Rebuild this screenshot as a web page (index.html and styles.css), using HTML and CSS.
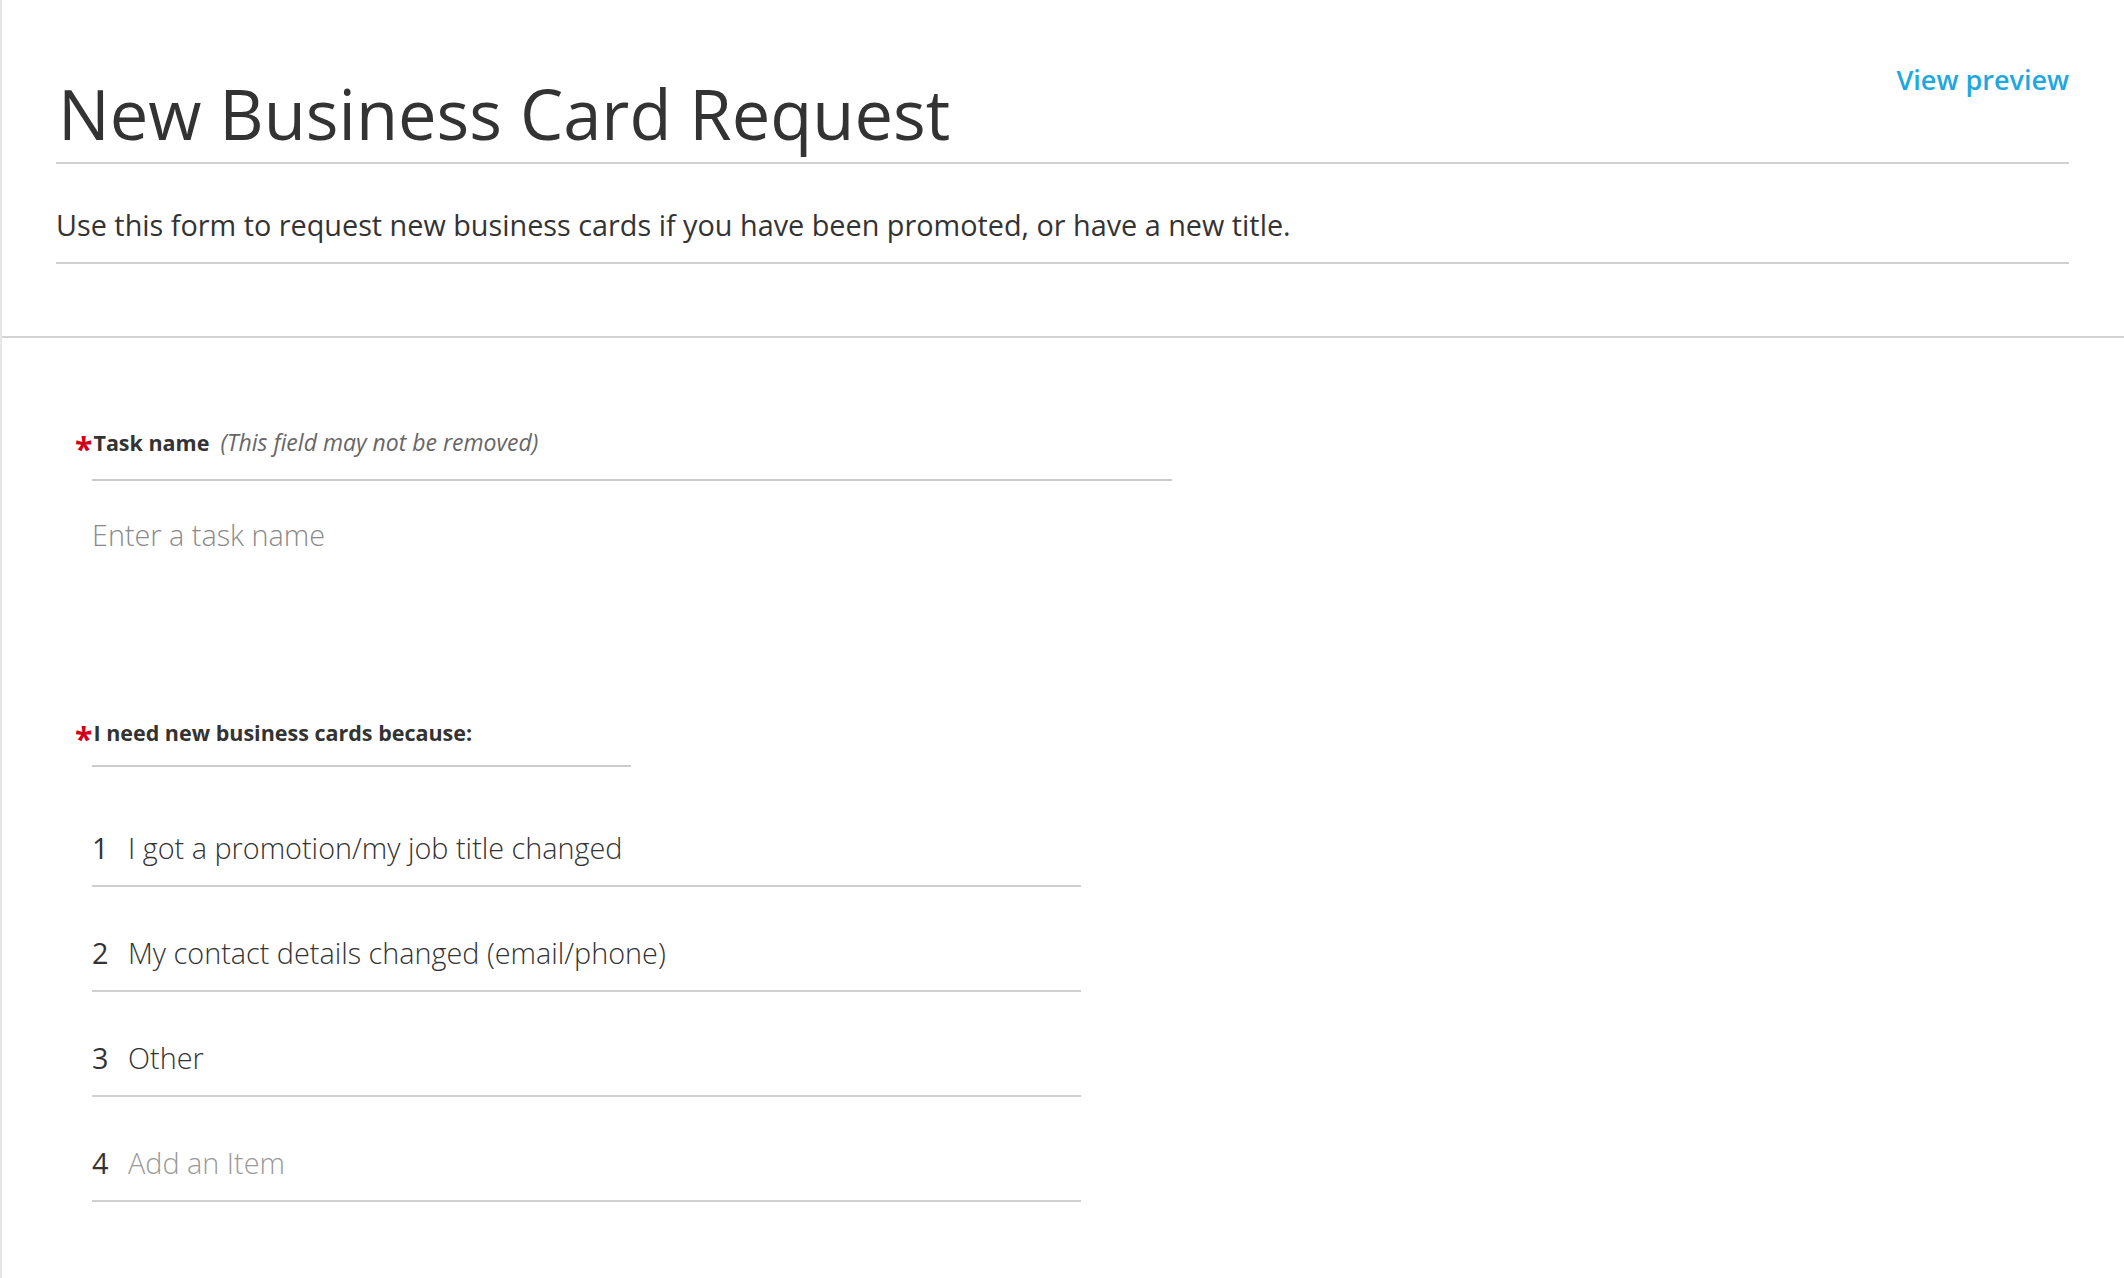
FILE: index.html
```html
<!DOCTYPE html>
<html lang="en">
<head>
<meta charset="utf-8">
<title>New Business Card Request</title>
<link rel="stylesheet" href="styles.css">
</head>
<body>
<div class="page">
  <header class="intro">
    <div class="title-row">
      <h1 class="title">New Business Card Request</h1>
      <a class="preview-link" href="#">View preview</a>
    </div>
    <p class="description">Use this form to request new business cards if you have been promoted, or have a new title.</p>
  </header>
  <main class="form">
    <section class="field field-task">
      <div class="field-label label-task"><span class="req">*</span><span class="label-text">Task name</span><span class="hint">(This field may not be removed)</span></div>
      <div class="field-input">Enter a task name</div>
    </section>
    <section class="field field-list">
      <div class="field-label label-list"><span class="req">*</span><span class="label-text">I need new business cards because:</span></div>
      <ol class="items">
        <li class="item"><span class="num">1</span><span class="item-text">I got a promotion/my job title changed</span></li>
        <li class="item"><span class="num">2</span><span class="item-text">My contact details changed (email/phone)</span></li>
        <li class="item"><span class="num">3</span><span class="item-text">Other</span></li>
        <li class="item"><span class="num">4</span><span class="item-text item-placeholder">Add an Item</span></li>
      </ol>
    </section>
  </main>
</div>
</body>
</html>
```

FILE: styles.css
```css
html, body {
  margin: 0;
  padding: 0;
  background: #ffffff;
}

body {
  font-family: "Open Sans", "Noto Sans", "Liberation Sans", sans-serif;
  color: #333333;
}

.page {
  border-left: 2px solid #e6e6e6;
  min-height: 100vh;
  box-sizing: border-box;
}

.intro {
  padding: 60px 55px 72px 54px;
  border-bottom: 2px solid #d2d2d2;
}

.title-row {
  display: flex;
  justify-content: space-between;
  align-items: flex-start;
  padding-bottom: 8px;
  border-bottom: 2px solid #d0d0d0;
}

.title {
  margin: 14px 0 0 2px;
  font-size: 68.7px;
  line-height: 80px;
  font-weight: 400;
  color: #333333;
}

.preview-link {
  font-size: 27px;
  line-height: 40px;
  font-weight: 600;
  color: #1ea7e0;
  text-decoration: none;
}

.description {
  margin: 0;
  padding: 41px 0 17px;
  font-size: 28.8px;
  line-height: 40px;
  font-weight: 400;
  color: #333333;
  border-bottom: 2px solid #d0d0d0;
}

.form {
  padding: 90px 0 0 90px;
}

.field-label {
  font-size: 21.5px;
  line-height: 28px;
  font-weight: 700;
  color: #333333;
  border-bottom: 2px solid #cccccc;
  white-space: nowrap;
}

.label-task {
  width: 1080px;
  padding-bottom: 22px;
}

.label-list {
  width: 539px;
  padding-bottom: 18px;
}

.req {
  margin-left: -17px;
  margin-right: 1px;
  font-size: 32px;
  line-height: 0;
  font-weight: 700;
  color: #d0021b;
  vertical-align: -10px;
}

.hint {
  margin-left: 11px;
  font-size: 23px;
  font-style: italic;
  font-weight: 400;
  color: #666666;
}

.field-input {
  padding-top: 34px;
  font-size: 28.8px;
  line-height: 40px;
  font-weight: 300;
  color: #8a8a8a;
}

.field-list {
  margin-top: 164px;
}

.items {
  list-style: none;
  margin: 15px 0 0;
  padding: 0;
  width: 989px;
}

.item {
  display: flex;
  padding: 46px 0 17px;
  font-size: 28.8px;
  line-height: 40px;
  border-bottom: 2px solid #d0d0d0;
}

.num {
  width: 36px;
  flex: none;
  font-weight: 400;
  color: #333333;
}

.item-text {
  font-weight: 300;
  color: #333333;
}

.item-placeholder {
  color: #999999;
}
```
